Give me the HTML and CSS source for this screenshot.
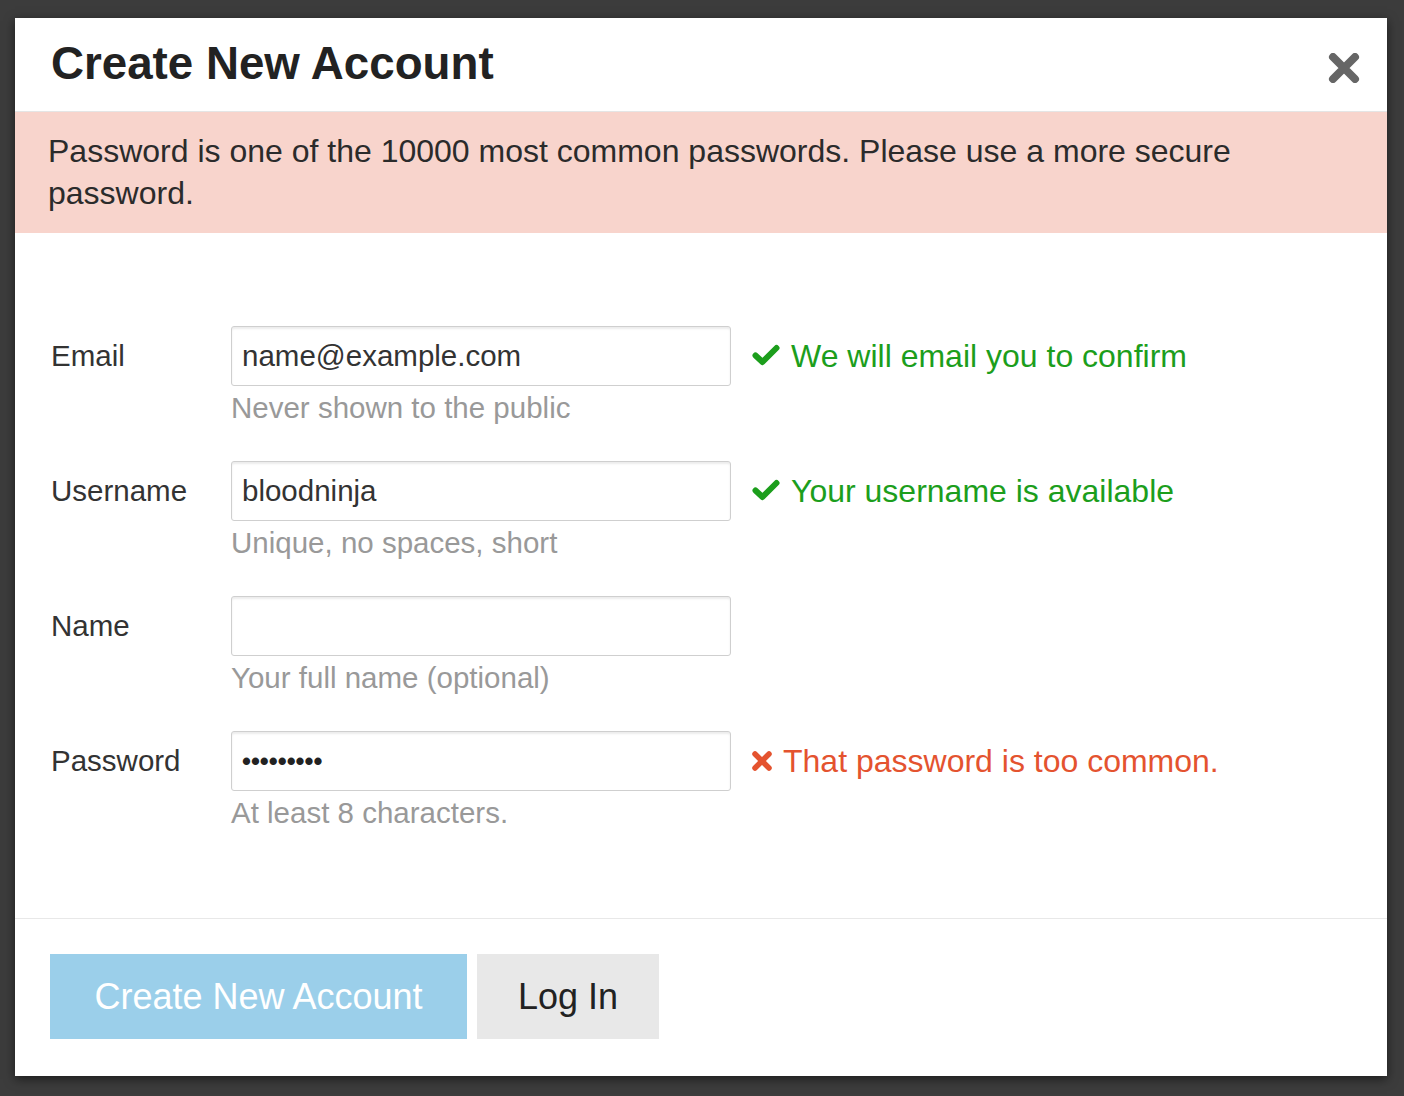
FILE: index.html
```html
<!DOCTYPE html>
<html lang="en">
<head>
<meta charset="utf-8">
<title>Create New Account</title>
<link rel="stylesheet" href="styles.css">
</head>
<body>
<div class="modal">
  <div class="modal-header">
    <h1 class="title">Create New Account</h1>
    <span class="close" aria-label="Close">
      <svg width="32" height="30" viewBox="0 0 32 30"><path d="M5 4 L27 26 M27 4 L5 26" stroke="#666" stroke-width="8" stroke-linecap="round" fill="none"/></svg>
    </span>
  </div>
  <div class="alert">Password is one of the 10000 most common passwords. Please use a more secure password.</div>
  <div class="modal-body">
    <div class="row">
      <label class="label">Email</label>
      <div class="field">
        <input class="input" type="text" value="name@example.com" readonly>
        <div class="help">Never shown to the public</div>
      </div>
      <div class="msg ok">
        <svg class="icon-check" width="28" height="22" viewBox="0 0 28 22"><path d="M3.5 11.5 L10.5 18 L24.5 4" stroke="currentColor" stroke-width="6" stroke-linecap="round" stroke-linejoin="round" fill="none"/></svg>
        <span>We will email you to confirm</span>
      </div>
    </div>
    <div class="row">
      <label class="label">Username</label>
      <div class="field">
        <input class="input" type="text" value="bloodninja" readonly>
        <div class="help">Unique, no spaces, short</div>
      </div>
      <div class="msg ok">
        <svg class="icon-check" width="28" height="22" viewBox="0 0 28 22"><path d="M3.5 11.5 L10.5 18 L24.5 4" stroke="currentColor" stroke-width="6" stroke-linecap="round" stroke-linejoin="round" fill="none"/></svg>
        <span>Your username is available</span>
      </div>
    </div>
    <div class="row">
      <label class="label">Name</label>
      <div class="field">
        <input class="input" type="text" value="" readonly>
        <div class="help">Your full name (optional)</div>
      </div>
      <div class="msg"></div>
    </div>
    <div class="row">
      <label class="label">Password</label>
      <div class="field">
        <input class="input pw" type="text" value="•••••••••" readonly>
        <div class="help">At least 8 characters.</div>
      </div>
      <div class="msg err">
        <svg class="icon-x" width="22" height="22" viewBox="0 0 22 22"><path d="M4 4 L18 18 M18 4 L4 18" stroke="currentColor" stroke-width="5.5" stroke-linecap="round" fill="none"/></svg>
        <span>That password is too common.</span>
      </div>
    </div>
  </div>
  <div class="modal-footer">
    <button class="btn btn-primary" type="button">Create New Account</button>
    <button class="btn btn-default" type="button">Log In</button>
  </div>
</div>
</body>
</html>
```
FILE: styles.css
```css
html, body {
  margin: 0;
  padding: 0;
}
body {
  background: #3c3c3c;
  padding: 18px 17px 20px 15px;
  font-family: "Liberation Sans", Arial, sans-serif;
  color: #333;
}
.modal {
  width: 1372px;
  background: #fff;
  box-shadow: 0 3px 10px rgba(0, 0, 0, 0.55);
}
.modal-header {
  height: 93px;
  border-bottom: 1px solid #e5e5e5;
  display: flex;
  align-items: center;
  justify-content: space-between;
  padding: 0 27px 0 36px;
}
.title {
  margin: 0;
  font-size: 45.7px;
  font-weight: bold;
  color: #222;
  line-height: 1;
  position: relative;
  top: -1px;
}
.close {
  display: flex;
  margin-top: 6px;
}
.alert {
  background: #f8d4cc;
  padding: 18px 33px 19px 33px;
  font-size: 32px;
  line-height: 42px;
  color: #2b2b2b;
}
.modal-body {
  padding: 93px 0 87px 36px;
  display: flex;
  flex-direction: column;
  gap: 35px;
}
.row {
  display: flex;
  align-items: flex-start;
}
.label {
  width: 180px;
  font-size: 29.5px;
  line-height: 60px;
  color: #333;
}
.field {
  width: 500px;
}
.input {
  display: block;
  box-sizing: border-box;
  width: 500px;
  height: 60px;
  margin: 0;
  border: 1px solid #cfcfcf;
  border-radius: 3px;
  box-shadow: inset 0 2px 2px rgba(0, 0, 0, 0.08);
  padding: 0 10px;
  font-family: "Liberation Sans", Arial, sans-serif;
  font-size: 29.5px;
  color: #333;
  background: #fff;
  outline: none;
}
.input.pw {
  font-size: 25.5px;
  font-weight: bold;
  color: #222;
}
.help {
  margin-top: 4px;
  font-size: 29.5px;
  line-height: 36px;
  color: #999;
}
.msg {
  margin-left: 21px;
  height: 60px;
  display: flex;
  align-items: center;
  font-size: 32px;
}
.msg.ok {
  color: #1c9e1c;
}
.msg.err {
  color: #e4532f;
}
.icon-check {
  margin-right: 11px;
  margin-top: -2px;
}
.icon-x {
  margin-right: 10px;
  margin-left: -1px;
}
.modal-footer {
  border-top: 1px solid #e8e8e8;
  padding: 35px 0 37px 35px;
  display: flex;
  gap: 10px;
}
.btn {
  height: 85px;
  border: none;
  padding: 0 41px;
  font-family: "Liberation Sans", Arial, sans-serif;
  font-size: 36px;
  margin: 0;
  white-space: nowrap;
}
.btn-primary {
  background: #9bcfea;
  color: #fff;
  width: 417px;
}
.btn-default {
  background: #e8e8e8;
  color: #222;
  width: 182px;
  padding: 0;
}
```
